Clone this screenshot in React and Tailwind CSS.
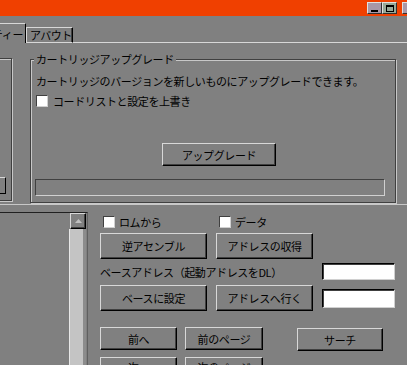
import React from "react";

function Btn({ className = "", children }) {
  return (
    <div
      className={`flex items-center justify-center shrink-0 whitespace-nowrap border border-t-[#d8d8d8] border-l-[#d8d8d8] border-r-black border-b-black shadow-[inset_-1px_-1px_0_#404040] ${className}`}
    >
      {children}
    </div>
  );
}

function Check() {
  return (
    <div className="w-[12px] h-[12px] shrink-0 bg-white border border-t-[#404040] border-l-[#404040] border-r-[#d0d0d0] border-b-[#d0d0d0]" />
  );
}

function Field({ className = "" }) {
  return (
    <div
      className={`shrink-0 bg-white border border-t-black border-l-black border-r-[#d0d0d0] border-b-[#d0d0d0] shadow-[inset_1px_1px_0_#404040] ${className}`}
    />
  );
}

export default function App() {
  return (
    <div className="w-[407px] h-[365px] overflow-hidden bg-[#808080] text-black text-[11px] leading-[12px] tracking-[-0.4px] font-['Noto_Sans_CJK_JP','Noto_Sans',sans-serif]">
      {/* title bar */}
      <div className="h-[16px] bg-[#f04000] flex items-start pt-[2px] pl-[367px]">
        <div className="w-[15px] h-[12px] shrink-0 bg-[#a898a8] border border-t-[#e0e0e0] border-l-[#e0e0e0] border-r-[#303030] border-b-[#303030] flex items-end justify-center pb-[1px]">
          <div className="w-[7px] h-[2px] bg-black" />
        </div>
        <div className="w-[15px] h-[12px] shrink-0 bg-[#98a898] border border-t-[#e0e0e0] border-l-[#e0e0e0] border-r-[#303030] border-b-[#303030] flex items-center justify-center">
          <div className="w-[8px] h-[7px] border border-black border-t-2" />
        </div>
        <div className="ml-[5px] w-[15px] h-[12px] shrink-0 bg-[#a898a8] border border-t-[#e0e0e0] border-l-[#e0e0e0] border-r-[#303030] border-b-[#303030]" />
      </div>

      {/* tabs */}
      <div className="h-[27px] flex items-end">
        <div className="w-[26px] h-[20px] shrink-0 overflow-hidden flex items-center justify-end pr-[2px] whitespace-nowrap border-t border-t-[#d8d8d8] border-r border-r-black">
          ユーティリティー
        </div>
        <div className="w-[47px] h-[16px] shrink-0 flex items-center pl-[3px] whitespace-nowrap border-t border-l border-b border-t-[#d8d8d8] border-l-[#d8d8d8] border-b-[#d8d8d8] border-r border-r-black shadow-[inset_-1px_0_0_#404040]">
          アバウト
        </div>
        <div className="flex-1 h-[1px] bg-[#d8d8d8]" />
      </div>

      {/* tab panel */}
      <div className="h-[162px] flex items-start pt-[15px] border-b border-b-[#c8c8c8]">
        {/* left group (cut off) */}
        <div className="-ml-[6px] w-[18px] h-[143px] shrink-0 border border-[#404040] shadow-[1px_1px_0_#c8c8c8,inset_1px_1px_0_#c8c8c8] flex flex-col justify-end pb-[6px]">
          <div className="w-[11px] h-[17px] border border-t-[#d8d8d8] border-l-[#d8d8d8] border-r-black border-b-black" />
        </div>

        {/* right group */}
        <div className="relative ml-[18px] mt-[1px] w-[366px] h-[144px] shrink-0 border border-[#404040] shadow-[1px_1px_0_#c8c8c8,inset_1px_1px_0_#c8c8c8] pt-[15px] pl-[5px]">
          <div className="absolute -top-[7px] left-[3px] px-[2px] bg-[#808080] whitespace-nowrap">
            カートリッジアップグレード
          </div>
          <div className="h-[12px] whitespace-nowrap">
            カートリッジのバージョンを新しいものにアップグレードできます。
          </div>
          <div className="mt-[8px] flex items-center">
            <Check />
            <span className="ml-[5px] whitespace-nowrap">コードリストと設定を上書き</span>
          </div>
          <Btn className="mt-[36px] ml-[126px] w-[114px] h-[23px]">アップグレード</Btn>
          <div className="mt-[13px] -ml-[1px] w-[350px] h-[17px] border border-t-[#404040] border-l-[#404040] border-r-[#d0d0d0] border-b-[#d0d0d0]" />
        </div>
      </div>

      {/* lower section */}
      <div className="h-[160px] flex items-start pt-[7px]">
        {/* list box */}
        <div className="w-[88px] h-[160px] shrink-0 flex justify-end border-t border-t-[#202020] border-r border-r-[#606060]">
          <div className="w-[18px] flex flex-col">
            <div className="w-[16px] h-[16px] ml-[1px] border border-t-[#d8d8d8] border-l-[#d8d8d8] border-r-black border-b-black shadow-[inset_-1px_-1px_0_#404040] flex items-center justify-center">
              <svg width="7" height="4" viewBox="0 0 7 4">
                <polygon points="3.5,0 7,4 0,4" fill="#c0c0c0" />
              </svg>
            </div>
            <div className="flex-1 flex">
              <div className="w-[14px] bg-[#c4c4c4] border-l border-l-[#e8e8e8]" />
              <div className="w-[3px] bg-[#8c8c8c]" />
            </div>
          </div>
        </div>

        {/* controls */}
        <div className="ml-[12px] pt-[4px] flex flex-col">
          <div className="h-[12px] flex items-center">
            <div className="w-[119px] pl-[3px] flex items-center">
              <Check />
              <span className="ml-[4px] whitespace-nowrap">ロムから</span>
            </div>
            <Check />
            <span className="ml-[4px] whitespace-nowrap">データ</span>
          </div>

          <div className="mt-[5px] flex">
            <Btn className="w-[107px] h-[26px]">逆アセンブル</Btn>
            <Btn className="ml-[9px] w-[97px] h-[26px]">アドレスの収得</Btn>
          </div>

          <div className="mt-[4px] flex items-center h-[17px]">
            <span className="w-[222px] whitespace-nowrap">ベースアドレス（起動アドレスをDL）</span>
            <Field className="w-[73px] h-[17px]" />
          </div>

          <div className="mt-[5px] flex items-center">
            <Btn className="w-[107px] h-[26px]">ベースに設定</Btn>
            <Btn className="ml-[9px] w-[97px] h-[26px]">アドレスへ行く</Btn>
            <Field className="ml-[9px] w-[73px] h-[19px]" />
          </div>

          <div className="mt-[16px] flex items-start">
            <Btn className="w-[77px] h-[23px]">前へ</Btn>
            <Btn className="ml-[8px] w-[78px] h-[23px]">前のページ</Btn>
            <Btn className="ml-[34px] mt-[1px] w-[86px] h-[23px]">サーチ</Btn>
          </div>

          <div className="mt-[6px] flex items-start">
            <Btn className="w-[77px] h-[23px] pb-[3px]">次へ</Btn>
            <Btn className="ml-[8px] w-[78px] h-[23px] pb-[3px]">次のページ</Btn>
          </div>
        </div>
      </div>
    </div>
  );
}
